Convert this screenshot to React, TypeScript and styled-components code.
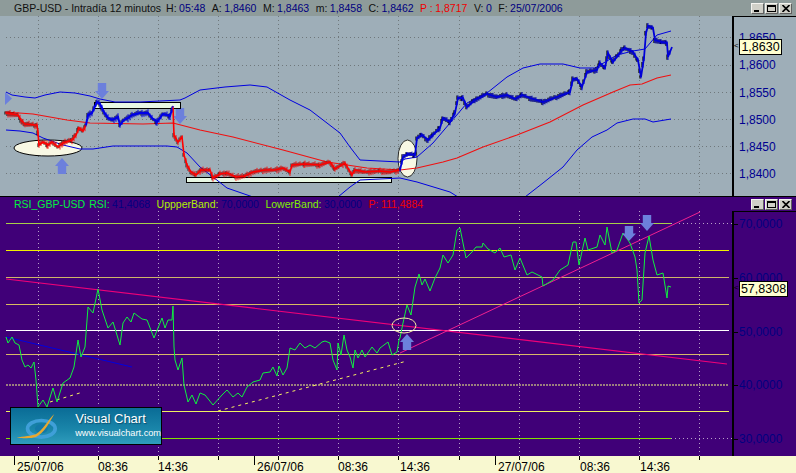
import React from 'react';
import styled, { createGlobalStyle } from 'styled-components';

type Pt = [number, number];

const UI_FONT = '"Liberation Sans", Arial, sans-serif';

const GRID_X = [38, 98, 158, 218, 278, 338, 398, 459, 519, 579, 639, 699];
const PRICE_Y = [37, 65, 92, 119, 146, 173];

const upperBand: Pt[] = [
  [6, 92], [12, 95], [25, 97], [35, 98], [45, 95], [60, 92], [75, 93], [90, 96], [100, 99], [115, 102],
  [140, 102], [180, 100], [185, 98], [200, 90], [225, 87], [250, 85], [267, 87], [290, 100], [310, 110],
  [340, 133], [350, 147], [360, 160], [400, 162], [405, 159], [417, 157], [433, 143], [450, 123], [467, 103],
  [487, 93], [507, 77], [523, 68], [540, 64], [563, 64], [580, 68], [595, 68], [617, 55], [633, 51], [645, 49],
  [657, 35], [671, 31],
];
const midBand: Pt[] = [
  [5, 112], [33, 114], [67, 120], [90, 123], [143, 124], [173, 123], [200, 130], [233, 137], [283, 150],
  [327, 162], [367, 168], [400, 170], [417, 168], [443, 162], [457, 158], [483, 147], [517, 135], [550, 122],
  [583, 105], [613, 92], [630, 85], [642, 84], [657, 78], [671, 75],
];
const lowerBand: Pt[] = [
  [6, 130], [20, 131], [33, 133], [43, 138], [63, 145], [80, 149], [93, 149], [113, 146], [167, 146], [177, 147],
  [187, 153], [200, 167], [213, 177], [227, 188], [253, 197], [338, 197], [350, 187], [360, 180], [400, 178],
  [417, 182], [450, 192], [458, 197], [525, 197], [543, 183], [563, 167], [577, 150], [592, 137], [607, 130],
  [617, 123], [633, 119], [645, 119], [653, 122], [671, 119],
];

const priceRed1: Pt[] = [
  [6, 113], [18, 115], [21, 120], [25, 124], [35, 125], [37, 125], [38, 133], [39, 145], [43, 142], [48, 145],
  [52, 142], [58, 147], [63, 143], [72, 140], [76, 135], [79, 128], [83, 131], [86, 125],
];
const priceBlue1: Pt[] = [
  [86, 125], [88, 115], [92, 113], [97, 102], [100, 104], [104, 112], [108, 118], [112, 120], [118, 117],
  [120, 125], [124, 120], [128, 118], [132, 115], [140, 113], [148, 113], [152, 118], [157, 122], [163, 114],
  [170, 116], [173, 106],
];
const priceRed2: Pt[] = [
  [173, 108], [174, 135], [178, 142], [182, 137], [184, 155], [187, 165], [191, 172], [196, 175], [201, 170],
  [210, 170], [213, 178], [220, 174], [227, 173], [236, 177], [245, 176], [253, 172], [265, 170], [275, 170],
  [283, 168], [290, 172], [292, 165], [305, 164], [320, 165], [330, 162], [335, 169], [345, 163], [352, 175],
  [355, 170], [365, 172], [380, 171], [390, 172], [400, 170],
];
const priceBlue2: Pt[] = [
  [400, 170], [403, 157], [408, 154], [415, 155], [417, 138], [422, 135], [428, 140], [433, 135], [440, 128],
  [443, 118], [450, 122], [455, 113], [458, 98], [463, 98], [467, 107], [475, 100], [487, 94], [497, 97],
  [507, 95], [515, 99], [522, 95], [530, 98], [543, 102], [557, 97], [570, 92], [573, 79], [577, 79], [582, 87],
  [587, 72], [597, 70], [600, 63], [605, 68], [608, 53], [613, 62], [622, 50], [625, 48], [633, 52], [638, 60],
  [641, 77], [644, 58], [646, 33], [648, 26], [653, 28], [655, 40], [662, 42], [667, 43], [668, 57], [672, 47],
];

const rsi: Pt[] = [
  [6, 337], [8, 343], [12, 337], [15, 343], [19, 345], [22, 360], [25, 367], [28, 365], [31, 368], [34, 362],
  [36, 380], [38, 407], [43, 400], [47, 407], [53, 388], [57, 402], [63, 383], [70, 378], [74, 367], [78, 340],
  [81, 357], [85, 347], [88, 307], [93, 313], [98, 289], [102, 310], [108, 328], [113, 322], [120, 345],
  [123, 323], [127, 317], [131, 322], [134, 313], [142, 319], [147, 320], [154, 338], [162, 318], [165, 328],
  [168, 320], [172, 320], [173, 306], [174, 347], [175, 360], [178, 370], [182, 358], [184, 385], [188, 402],
  [192, 395], [196, 404], [200, 393], [205, 395], [213, 405], [222, 395], [227, 390], [233, 397], [238, 393],
  [242, 397], [247, 387], [253, 382], [260, 380], [263, 373], [270, 372], [273, 367], [277, 376], [279, 366],
  [283, 375], [287, 368], [290, 348], [295, 350], [300, 343], [305, 348], [310, 345], [315, 348], [322, 342],
  [325, 341], [330, 343], [333, 360], [337, 370], [338, 343], [341, 355], [344, 335], [347, 350], [350, 357],
  [353, 368], [355, 350], [358, 358], [362, 350], [365, 357], [372, 347], [377, 353], [380, 348], [388, 342],
  [392, 355], [397, 352], [399, 340], [400, 338], [403, 323], [407, 305], [411, 315], [415, 287], [419, 274],
  [422, 285], [425, 279], [430, 291], [435, 278], [440, 268], [443, 255], [448, 263], [453, 255], [457, 230],
  [460, 228], [463, 243], [466, 258], [472, 252], [476, 247], [482, 247], [483, 243], [488, 249], [495, 253],
  [500, 248], [504, 257], [511, 255], [515, 270], [520, 258], [527, 275], [532, 272], [542, 277], [543, 286],
  [553, 280], [560, 270], [568, 265], [573, 242], [576, 242], [579, 265], [585, 238], [588, 250], [597, 247],
  [600, 235], [605, 245], [607, 227], [612, 253], [617, 250], [623, 233], [630, 243], [635, 257], [637, 270],
  [639, 303], [642, 300], [645, 253], [649, 236], [653, 260], [657, 275], [663, 273], [667, 298], [668, 286],
  [671, 287],
];

const toPoints = (pts: Pt[]): string => pts.map(([x, y]) => `${x},${y}`).join(' ');

// small bars along the price so it reads as candles and not as a plain line
const barsPath = (pts: Pt[], size: number): string => {
  let d = '';
  let n = 0;
  for (let i = 0; i < pts.length - 1; i++) {
    const [x0, y0] = pts[i];
    const [x1, y1] = pts[i + 1];
    for (let x = x0; x < x1; x += 2) {
      const y = y0 + ((y1 - y0) * (x - x0)) / (x1 - x0);
      const up = ((n * 7) % 5) * 0.6 * size;
      const down = ((n * 13) % 7) * 0.5 * size;
      d += `M${x} ${(y - 1.5 - up).toFixed(1)}V${(y + 1.5 + down).toFixed(1)}`;
      n++;
    }
  }
  return d;
};

const arrowDown = (x: number, y: number, h: number, w: number): string => {
  const head = h * 0.5;
  const t = w * 0.3;
  return `${x - t},${y} ${x + t},${y} ${x + t},${y + h - head} ${x + w / 2},${y + h - head} ${x},${y + h} ${x - w / 2},${y + h - head} ${x - t},${y + h - head}`;
};

const arrowUp = (x: number, y: number, h: number, w: number): string => {
  const head = h * 0.5;
  const t = w * 0.3;
  return `${x - t},${y + h} ${x + t},${y + h} ${x + t},${y + head} ${x + w / 2},${y + head} ${x},${y} ${x - w / 2},${y + head} ${x - t},${y + head}`;
};

const GlobalStyle = createGlobalStyle`
  html, body {
    margin: 0;
    padding: 0;
    background: #400078;
  }
`;

const Window = styled.div`
  display: flex;
  flex-direction: column;
  width: 796px;
  height: 473px;
  overflow: hidden;
  font-family: ${UI_FONT};
`;

const TitleBar = styled.div<{ $bg: string; $h: number }>`
  display: flex;
  align-items: center;
  flex: none;
  box-sizing: border-box;
  height: ${(p) => p.$h}px;
  padding: 0 4px 0 14px;
  background: ${(p) => p.$bg};
  font-size: 10.5px;
  white-space: nowrap;
`;

const IndicatorBar = styled(TitleBar)`
  border-top: 1px solid #000;
`;

const Field = styled.span<{ $c: string; $gap?: number }>`
  color: ${(p) => p.$c};
  margin-right: ${(p) => p.$gap ?? 6.5}px;
`;

const Value = styled.span<{ $c?: string }>`
  color: ${(p) => p.$c ?? '#000080'};
  margin-left: 2.5px;
`;

const Controls = styled.div`
  display: flex;
  gap: 1px;
  margin-left: auto;
`;

const WinButton = styled.div`
  display: flex;
  align-items: center;
  justify-content: center;
  width: 11px;
  height: 9px;
  background: #d0d0c8;
  border-top: 1px solid #f4f4f0;
  border-left: 1px solid #f4f4f0;
  border-bottom: 1px solid #606060;
  border-right: 1px solid #606060;
`;

const Body = styled.div<{ $bg: string; $h: number }>`
  position: relative;
  display: flex;
  flex: none;
  height: ${(p) => p.$h}px;
  background: ${(p) => p.$bg};
`;

const Plot = styled.svg`
  display: block;
  flex: none;
  width: 732px;
  height: 100%;
`;

const Axis = styled.div<{ $pad: number; $step: number; $c: string }>`
  display: flex;
  flex-direction: column;
  flex: 1;
  gap: ${(p) => p.$step}px;
  padding: ${(p) => p.$pad}px 0 0 5px;
  border-left: 2px solid #000;
  border-top: 1px solid #000;
  color: ${(p) => p.$c};
  font-size: 12px;
`;

const AxisLabel = styled.div<{ $tick?: boolean }>`
  position: relative;
  display: flex;
  align-items: center;
  height: 0;
  ${(p) =>
    p.$tick &&
    `&::before {
      content: '';
      position: absolute;
      left: -5px;
      top: 0;
      width: 4px;
      height: 1px;
      background: #000;
    }`}
`;

const ValueTag = styled.div<{ $top: number; $w: number }>`
  position: absolute;
  left: 739px;
  top: ${(p) => p.$top}px;
  display: flex;
  align-items: center;
  justify-content: center;
  box-sizing: border-box;
  width: ${(p) => p.$w}px;
  height: 16px;
  background: #ffffd0;
  border: 1px solid #000;
  color: #000;
  font-size: 12.5px;
  &::before {
    content: '<';
    position: absolute;
    left: -6px;
    top: 1px;
    font-size: 8px;
    color: #000;
  }
`;

const Logo = styled.div`
  position: absolute;
  left: 10px;
  top: 196px;
  display: flex;
  box-sizing: border-box;
  width: 152px;
  height: 38px;
  background: linear-gradient(180deg, #0a6c96 0%, #1a86aa 60%, #2f9cbc 100%);
  border: 1px solid #000;
`;

const LogoText = styled.div`
  display: flex;
  flex-direction: column;
  margin-left: 9px;
  padding-top: 3px;
  color: #fff;
`;

const LogoName = styled.div`
  font-size: 13px;
  line-height: 16px;
  text-shadow: 1px 1px 1px #0b4f70;
`;

const LogoUrl = styled.div`
  margin-top: 1px;
  font-size: 9.2px;
  line-height: 11px;
`;

const TimeAxis = styled.svg`
  display: block;
  flex: none;
  width: 796px;
  height: 17px;
  background: #f8f8d0;
`;

const TimeLabel = styled.text`
  font-family: ${UI_FONT};
  font-size: 12px;
  fill: #000;
`;

const ButtonSet: React.FC = () => (
  <Controls>
    <WinButton>
      <svg width="7" height="7" viewBox="0 0 7 7">
        <rect x="0" y="5" width="5" height="2" fill="#000" />
      </svg>
    </WinButton>
    <WinButton>
      <svg width="9" height="7" viewBox="0 0 9 7">
        <rect x="0.5" y="0.5" width="8" height="6" fill="none" stroke="#000" />
        <rect x="0" y="0" width="9" height="2" fill="#000" />
      </svg>
    </WinButton>
    <WinButton>
      <svg width="8" height="7" viewBox="0 0 8 7">
        <path d="M0.5 0 L7.5 7 M7.5 0 L0.5 7" stroke="#000" strokeWidth="1.6" />
      </svg>
    </WinButton>
  </Controls>
);

const PRICE_LABELS = ['1,8650', '1,8600', '1,8550', '1,8500', '1,8450', '1,8400'];
const RSI_LABELS = ['70,0000', '60,0000', '50,0000', '40,0000', '30,0000'];

const TIME_TICKS = [38, 98, 158, 218, 278, 338, 398, 459, 519, 579, 639, 699];
const DAY_TICKS = [14, 254, 495];
const TIME_LABELS: { x: number; text: string }[] = [
  { x: 17, text: '25/07/06' },
  { x: 98, text: '08:36' },
  { x: 158, text: '14:36' },
  { x: 257, text: '26/07/06' },
  { x: 338, text: '08:36' },
  { x: 400, text: '14:36' },
  { x: 498, text: '27/07/06' },
  { x: 580, text: '08:36' },
  { x: 640, text: '14:36' },
];

const RSI_LEVELS: { y: number; c: string; w: number; x2: number; dash?: string }[] = [
  { y: 223.5, c: '#a8d048', w: 1, x2: 671 },
  { y: 250.5, c: '#f0f000', w: 1, x2: 729 },
  { y: 277.5, c: '#d0b468', w: 1, x2: 729 },
  { y: 304.5, c: '#d8bc60', w: 1, x2: 729 },
  { y: 330.5, c: '#ffffff', w: 1, x2: 729 },
  { y: 354.5, c: '#d8b868', w: 1, x2: 729 },
  { y: 385, c: '#b8a880', w: 1.4, x2: 729, dash: '2 1' },
  { y: 411.5, c: '#f0f060', w: 1, x2: 729 },
  { y: 438.5, c: '#80e000', w: 1, x2: 671 },
];

const ARROW = '#6c80dc';

const App: React.FC = () => {
  return (
    <Window>
      <GlobalStyle />
      <TitleBar $bg="#8e9b9a" $h={16}>
        <Field $c="#101010" $gap={5}>GBP-USD - Intradía 12 minutos</Field>
        <Field $c="#101010">H:<Value>05:48</Value></Field>
        <Field $c="#101010">A:<Value>1,8460</Value></Field>
        <Field $c="#101010">M:<Value>1,8463</Value></Field>
        <Field $c="#101010">m:<Value>1,8458</Value></Field>
        <Field $c="#101010">C:<Value>1,8462</Value></Field>
        <Field $c="#f00000">P :<Value $c="#f00000">1,8717</Value></Field>
        <Field $c="#101010">V:<Value>0</Value></Field>
        <Field $c="#101010">F:<Value>25/07/2006</Value></Field>
        <ButtonSet />
      </TitleBar>

      <Body $bg="#9eaeb8" $h={180}>
        <Plot viewBox="0 16 732 180">
          {GRID_X.map((x) => (
            <line key={x} x1={x + 0.5} x2={x + 0.5} y1={16} y2={196} stroke="#70787c" strokeDasharray="1 3" />
          ))}
          {PRICE_Y.map((y) => (
            <line key={y} x1={6} x2={732} y1={y + 0.5} y2={y + 0.5} stroke="#70787c" strokeDasharray="1 3" />
          ))}

          <polygon points={`5,92 12,98.5 5,105`} fill={ARROW} />
          <polygon points={arrowDown(102, 83, 16, 14)} fill={ARROW} />
          <polygon points={arrowUp(62, 158, 16, 14)} fill={ARROW} />
          <polygon points={arrowDown(180, 108, 16, 14)} fill={ARROW} />

          <ellipse cx={48} cy={148} rx={34} ry={8} fill="#f8f8e4" stroke="#000" />
          <ellipse cx={407.5} cy={158.5} rx={9.5} ry={18.5} fill="#f8f8e4" stroke="#000" strokeWidth={0.8} />
          <rect x={94.5} y={102.5} width={86} height={6} fill="#e8f8e4" stroke="#000" />
          <rect x={186.5} y={177.5} width={205} height={5} fill="#e8f8e4" stroke="#000" />

          <polyline points={toPoints(upperBand)} fill="none" stroke="#0000e0" strokeWidth={1} />
          <polyline points={toPoints(lowerBand)} fill="none" stroke="#0000e0" strokeWidth={1} />
          <polyline points={toPoints(midBand)} fill="none" stroke="#f01010" strokeWidth={1.1} />

          <g transform="translate(-1 0)">
            <path d={barsPath(priceRed1, 0.4)} stroke="#000" strokeWidth={1} fill="none" />
            <path d={barsPath(priceBlue1, 0.4)} stroke="#000" strokeWidth={1} fill="none" />
            <path d={barsPath(priceRed2, 0.3)} stroke="#000" strokeWidth={0.8} fill="none" />
            <path d={barsPath(priceBlue2, 0.5)} stroke="#000" strokeWidth={1.2} fill="none" />
          </g>
          <polyline points={toPoints(priceRed1)} fill="none" stroke="#ff0000" strokeWidth={1.6} />
          <polyline points={toPoints(priceBlue1)} fill="none" stroke="#0000e8" strokeWidth={2} />
          <polyline points={toPoints(priceRed2)} fill="none" stroke="#ff0000" strokeWidth={1.6} />
          <polyline points={toPoints(priceBlue2)} fill="none" stroke="#0000d8" strokeWidth={1.8} />
          <path d={barsPath(priceRed1, 0.9)} stroke="#ff0000" strokeWidth={0.9} fill="none" />
          <path d={barsPath(priceBlue1, 0.9)} stroke="#0000e8" strokeWidth={1} fill="none" />
          <path d={barsPath(priceRed2, 0.8)} stroke="#ff0000" strokeWidth={0.9} fill="none" />
          <path d={barsPath(priceBlue2, 0.6)} stroke="#0000d8" strokeWidth={1} fill="none" />
        </Plot>
        <Axis $pad={21} $step={27.3} $c="#000090">
          {PRICE_LABELS.map((l) => (
            <AxisLabel key={l}>{l}</AxisLabel>
          ))}
        </Axis>
        <ValueTag $top={23} $w={43}>1,8630</ValueTag>
      </Body>

      <IndicatorBar $bg="#400078" $h={15}>
        <Field $c="#00f040" $gap={4}>RSI_GBP-USD</Field>
        <Field $c="#00f040">RSI:<Value>41,4068</Value></Field>
        <Field $c="#b0f000">UppperBand:<Value>70,0000</Value></Field>
        <Field $c="#80f000">LowerBand:<Value>30,0000</Value></Field>
        <Field $c="#f00000">P:<Value $c="#f00000">111,4884</Value></Field>
        <ButtonSet />
      </IndicatorBar>

      <Body $bg="#400078" $h={245}>
        <Plot viewBox="0 211 732 245">
          {GRID_X.map((x) => (
            <line key={x} x1={x + 0.5} x2={x + 0.5} y1={211} y2={456} stroke="#b8a0c8" strokeDasharray="1 3" />
          ))}
          {RSI_LEVELS.map((l) => (
            <line key={l.y} x1={6} x2={l.x2} y1={l.y} y2={l.y} stroke={l.c} strokeWidth={l.w} strokeDasharray={l.dash} />
          ))}
          <line x1={671} x2={732} y1={223.5} y2={223.5} stroke="#b8a0c8" strokeDasharray="1 3" />
          <line x1={671} x2={732} y1={438.5} y2={438.5} stroke="#b8a0c8" strokeDasharray="1 3" />

          <line x1={6} y1={279} x2={727} y2={364} stroke="#f00078" strokeWidth={1.2} />
          <line x1={400} y1={353} x2={700} y2={212} stroke="#f02090" strokeWidth={1} />
          <line x1={6} y1={337} x2={132} y2={367} stroke="#0000e0" strokeWidth={1} />
          <line x1={50} y1={402} x2={83} y2={392} stroke="#f8f060" strokeDasharray="3 4" />
          <line x1={218} y1={411} x2={407} y2={361} stroke="#f8f060" strokeDasharray="3 4" />

          <polyline points={toPoints(rsi)} fill="none" stroke="#10f040" strokeWidth={1} />

          <ellipse cx={404} cy={325.5} rx={12} ry={7.5} fill="none" stroke="#f8f0a0" />
          <polygon points={arrowUp(407, 334, 16, 14)} fill={ARROW} />
          <polygon points={arrowDown(629, 226, 15, 14)} fill={ARROW} />
          <polygon points={arrowDown(647, 215, 16, 14)} fill={ARROW} />
        </Plot>
        <Axis $pad={12} $step={53.75} $c="#000080">
          {RSI_LABELS.map((l) => (
            <AxisLabel key={l} $tick>{l}</AxisLabel>
          ))}
        </Axis>
        <ValueTag $top={70} $w={49}>57,8308</ValueTag>
        <Logo>
          <svg width="60" height="36" viewBox="0 0 60 36">
            <ellipse cx="33" cy="21" rx="15" ry="9" fill="none" stroke="#3f9fd8" strokeWidth="4" />
            <ellipse cx="33" cy="21" rx="7" ry="5" fill="#1378a8" />
            <path d="M47 5 C42 14 36 26 27 30 C22 32 12 31 6 31 C14 29 22 29 27 27 C34 23 40 12 47 5 Z" fill="#e8a830" />
          </svg>
          <LogoText>
            <LogoName>Visual Chart</LogoName>
            <LogoUrl>www.visualchart.com</LogoUrl>
          </LogoText>
        </Logo>
      </Body>

      <TimeAxis viewBox="0 456 796 17">
        {TIME_TICKS.map((x) => (
          <line key={x} x1={x + 0.5} x2={x + 0.5} y1={456} y2={460} stroke="#000" />
        ))}
        {DAY_TICKS.map((x) => (
          <line key={x} x1={x + 0.5} x2={x + 0.5} y1={456} y2={465} stroke="#000" />
        ))}
        {TIME_LABELS.map((l) => (
          <TimeLabel key={l.x} x={l.x} y={471}>{l.text}</TimeLabel>
        ))}
      </TimeAxis>
    </Window>
  );
};

export default App;
